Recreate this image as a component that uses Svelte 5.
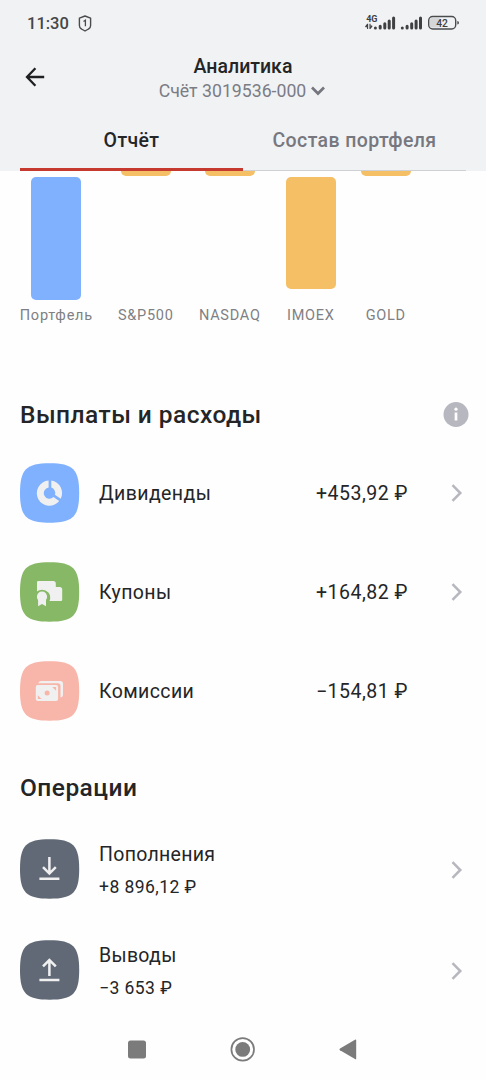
<script>
	const bars = [
		{label: "Портфель", width: 73, top: 5.5, height: 123.5, color: "#7fb1ff"},
		{label: "S&P500", width: 56, top: 0, height: 5.4, color: "#f5bf66"},
		{label: "NASDAQ", width: 62, top: 0, height: 5.4, color: "#f5bf66"},
		{label: "IMOEX", width: 50, top: 6, height: 112, color: "#f5bf66"},
		{label: "GOLD", width: 50, top: 0, height: 5.4, color: "#f5bf66"},
	];
	
	const payments = [
		{icon: "pie", label: "Дивиденды", amount: "+453,92 ₽", link: true},
		{icon: "coupon", label: "Купоны", amount: "+164,82 ₽", link: true},
		{icon: "cash", label: "Комиссии", amount: "−154,81 ₽", link: false},
	];
	
	const operations = [
		{icon: "down", label: "Пополнения", amount: "+8 896,12 ₽"},
		{icon: "up", label: "Выводы", amount: "−3 653 ₽"},
	];
	
	let tab = $state("report");
</script>

{#snippet chevron()}
	<svg class="chevron" width="14" height="20" viewBox="0 0 14 20">
		<path d="M2.5 2.2 10.3 10 2.5 17.8" fill="none" stroke="#b7b7bf" stroke-width="2.5" />
	</svg>
{/snippet}

{#snippet tile(icon)}
	<svg class="tile {icon}" width="60" height="60" viewBox="0 0 60 60">
		<path class="bg" d="M29.6 .3C53 .3 59.2 6.5 59.2 30S53 59.7 29.6 59.7 0 53.5 0 30 6.2 .3 29.6 .3Z" />
		{#if icon === "pie"}
			<path d="M28.6 17.6V24.6A5.6 5.6 0 1 0 33.4 34.1L39.2 38.1A12.6 12.6 0 1 1 28.6 17.6Z" />
			<path d="M31.3 17.5A12.6 12.6 0 0 1 40.7 35.7L34.9 31.8A5.6 5.6 0 0 0 31.3 24.6Z" />
		{:else if icon === "coupon"}
			<path d="M17 20.2Q17 19 18.2 19H33.3Q35.8 19 35.8 21.5V25H39.7Q42.2 25 42.2 27.5V37.7Q42.2 39 41 39H29.5Q31.5 34.2 28.4 30.5 25 27 20.5 27.9 18.6 28.3 17 29.5Z" />
			<circle cx="22" cy="34.7" r="5.1" />
			<path d="M18.1 37H26V44.3L22 42 18.1 44.3Z" />
		{:else if icon === "cash"}
			<path d="M18.2 22.3Q19 20 21.3 20H40.3Q43 20 43 22.7V34Q43 36 40.5 36.5V25Q40.5 22.3 37.8 22.3Z" />
			<path fill-rule="evenodd" d="M17.8 24H36.1Q38.1 24 38.1 26V38Q38.1 40 36.1 40H17.8Q15.8 40 15.8 38V26Q15.8 24 17.8 24ZM17.8 34.3V38H21.5ZM32.5 26V26.3L36.1 29.8V26Z" />
			<circle class="coin" cx="27.1" cy="32" r="2.5" />
		{:else if icon === "down"}
			<path class="line" d="M29.4 18V34.5M23 28.2 29.4 34.6 35.8 28.2M19.4 39.8H39.4" />
		{:else}
			<path class="line" d="M29.4 36V20.5M23 26.4 29.4 20 35.8 26.4M19.4 39.9H39.4" />
		{/if}
	</svg>
{/snippet}

<div class="screen">
	<header>
		<div class="status">
			<span class="time">11:30</span>
			<svg class="shield" width="14" height="17" viewBox="0 0 14 17">
				<path d="M7 1 12.6 3.2V10.5Q12.6 13 10.5 14L7 16 3.5 14Q1.4 13 1.4 10.5V3.2Z" fill="none" stroke="#4a4b4d" stroke-width="1.4" stroke-linejoin="round" />
				<path d="M5.5 6.5 7.4 5.3V11.3" fill="none" stroke="#4a4b4d" stroke-width="1.3" />
			</svg>
			<svg class="signals" width="96" height="18" viewBox="0 0 96 18">
				<text x="1.2" y="8" font-size="9" font-weight="700">4G</text>
				<path d="M2.6 9.8V15M.4 12.8 2.6 10.2M.4 12.8H2.6M5 9.8V15M7.2 12 5 14.6M7.2 12H5" fill="none" stroke="#3f4042" stroke-width="1.1" />
				<g stroke="#3f4042" stroke-width="3" stroke-linecap="round">
					<path d="M10.4 14V14.1M15.2 12.2V14.1M19.8 9.7V14.1M24.2 6.9V14.1M28.6 4.1V14.1" />
					<path d="M37.3 14V14.1M42.1 12.2V14.1M46.7 9.7V14.1M51.1 6.9V14.1M55.5 4.1V14.1" />
				</g>
				<path d="M66.5 4H74.5V13.5H66.5Q65 13.5 65 12V5.5Q65 4 66.5 4Z" fill="#d5d6d8" />
				<rect x="63.7" y="2.5" width="27" height="12.5" rx="4" fill="none" stroke="#4a4b4d" stroke-width="1.4" />
				<path d="M92.3 7Q94 7 94 8.8T92.3 10.6Z" fill="#4a4b4d" />
				<text x="77" y="12.6" font-size="10.3" font-weight="500" text-anchor="middle">42</text>
			</svg>
		</div>
		<div class="appbar">
			<button class="back" aria-label="Назад">
				<svg width="20" height="20" viewBox="0 0 20 20">
					<path d="M10.4 1.2 2 10 10.4 18.8M2 10H19.2" fill="none" stroke="#1f2022" stroke-width="2.3" />
				</svg>
			</button>
			<div class="titles">
				<h1>Аналитика</h1>
				<div class="account">
					<span>Счёт 3019536-000</span>
					<svg width="14" height="10" viewBox="0 0 14 10">
						<path d="M1 1.5 7 7.5 13 1.5" fill="none" stroke="#75767e" stroke-width="2.7" />
					</svg>
				</div>
			</div>
		</div>
		<div class="tabs">
			<button class:active={tab === "report"} onclick={() => tab = "report"}>Отчёт</button>
			<button class:active={tab === "portfolio"} onclick={() => tab = "portfolio"}>Состав портфеля</button>
		</div>
	</header>
	
	<div class="chart">
		{#each bars as bar}
			<div class="column" style:width="{bar.width}px">
				<div class="plot" style:padding-top="{bar.top}px">
					<div
						class="bar"
						class:cut={bar.top === 0}
						style:height="{bar.height}px"
						style:background-color={bar.color}
					></div>
				</div>
				<span>{bar.label}</span>
			</div>
		{/each}
	</div>
	
	<section class="payments">
		<div class="heading">
			<h2>Выплаты и расходы</h2>
			<svg width="26" height="26" viewBox="0 0 26 26">
				<circle cx="13" cy="12.5" r="12.5" fill="#b7b7bf" />
				<circle cx="13" cy="7.2" r="1.6" fill="#fff" />
				<path d="M13 10.5V18.5" stroke="#fff" stroke-width="2.7" />
			</svg>
		</div>
		{#each payments as item}
			<div class="row">
				{@render tile(item.icon)}
				<span class="label">{item.label}</span>
				<span class="amount">{item.amount}</span>
				<div class="end">
					{#if item.link}
						{@render chevron()}
					{/if}
				</div>
			</div>
		{/each}
	</section>
	
	<section class="operations">
		<div class="heading">
			<h2>Операции</h2>
		</div>
		{#each operations as item}
			<div class="row">
				{@render tile(item.icon)}
				<div class="lines">
					<span class="label">{item.label}</span>
					<span class="sub">{item.amount}</span>
				</div>
				<div class="end">
					{@render chevron()}
				</div>
			</div>
		{/each}
	</section>
	
	<nav>
		<svg width="26" height="26" viewBox="0 0 26 26">
			<rect x="4" y="4.4" width="18" height="18" rx="2.5" />
		</svg>
		<svg width="26" height="26" viewBox="0 0 26 26">
			<circle cx="12.7" cy="13.4" r="11.3" fill="none" stroke="#7b7b7b" stroke-width="1.7" />
			<circle cx="12.7" cy="13.4" r="7.4" />
		</svg>
		<svg width="26" height="26" viewBox="0 0 26 26">
			<path d="M4 12.5 19 3.7Q20.2 3 20.2 4.4V22.4Q20.2 23.8 19 23.1L4 14.3Q2.7 13.4 4 12.5Z" />
		</svg>
	</nav>
</div>

<style>
	:global(body) {
		margin: 0;
		background-color: #fefefe;
	}
	.screen {
		width: 486px;
		height: 1080px;
		overflow: hidden;
		display: flex;
		flex-direction: column;
		
		font-family: Roboto, "Noto Sans", sans-serif;
		color: #242527;
		background-color: #fefefe;
	}
	svg {
		display: block;
		flex-shrink: 0;
	}
	h1, h2 {
		margin: 0;
		font-weight: 500;
	}
	button {
		border: 0;
		padding: 0;
		background: none;
		font: inherit;
		cursor: pointer;
	}
	
	header {
		height: 171px;
		flex-shrink: 0;
		background-color: #f1f2f4;
	}
	.status {
		display: flex;
		align-items: center;
		height: 46px;
		padding: 0 25px 0 27px;
		box-sizing: border-box;
	}
	.time {
		width: 42px;
		padding-top: 1px;
		
		font-size: 16.5px;
		font-weight: 500;
		color: #454648;
	}
	.shield {
		margin-left: 9px;
	}
	.signals {
		margin-left: auto;
		fill: #3f4042;
	}
	.appbar {
		display: grid;
		grid-template-columns: 46px 1fr 46px;
		height: 64px;
	}
	.back {
		display: flex;
		align-items: center;
		padding: 0 0 3px 25px;
		box-sizing: border-box;
	}
	.titles {
		display: flex;
		flex-direction: column;
		align-items: center;
		padding-top: 8px;
	}
	h1 {
		font-size: 19.5px;
		line-height: 25px;
	}
	.account {
		display: flex;
		align-items: center;
		gap: 5px;
		padding-right: 2px;
		
		font-size: 17.7px;
		line-height: 24px;
		color: #7b7c84;
	}
	.tabs {
		display: grid;
		grid-template-columns: 1fr 1fr;
		height: 61px;
		padding: 0 20px;
	}
	.tabs button {
		border-bottom: solid 1px #cfd0d3;
		
		font-size: 19.5px;
		font-weight: 500;
		letter-spacing: 0.4px;
		color: #77787f;
	}
	.tabs .active {
		border-bottom: solid 3px #c5392e;
		padding-top: 2px;
		color: #242527;
	}
	
	.chart {
		display: flex;
		gap: 25px;
		height: 225px;
		flex-shrink: 0;
		padding-left: 19.8px;
	}
	.column {
		display: flex;
		flex-direction: column;
		align-items: center;
		
		font-size: 14.5px;
		line-height: 18px;
		letter-spacing: 0.75px;
		white-space: nowrap;
		color: #7f8084;
	}
	.plot {
		height: 136px;
		box-sizing: border-box;
	}
	.bar {
		width: 50px;
		border-radius: 5px;
	}
	.cut {
		border-radius: 0 0 5px 5px;
	}
	
	.heading {
		display: flex;
		align-items: center;
		justify-content: space-between;
		height: 37px;
		padding: 0 17px 0 20px;
	}
	h2 {
		font-size: 24.5px;
		letter-spacing: 0.46px;
	}
	.payments {
		height: 373px;
		flex-shrink: 0;
	}
	.payments .heading {
		margin-bottom: 10px;
	}
	.row {
		display: flex;
		align-items: center;
		height: 99px;
		padding: 0 22px 0 20px;
	}
	.label {
		font-size: 19.5px;
		letter-spacing: 0.4px;
	}
	.row > .label, .lines {
		margin-left: 19px;
		flex-grow: 1;
	}
	.amount {
		font-size: 19.5px;
		letter-spacing: 0.5px;
	}
	.row > .label, .amount {
		padding-top: 1px;
	}
	.end {
		display: flex;
		justify-content: flex-end;
		width: 56px;
	}
	.lines {
		display: flex;
		flex-direction: column;
		gap: 8px;
		padding-top: 2px;
		line-height: 24px;
	}
	.lines .label {
		letter-spacing: 0.3px;
	}
	.sub {
		font-size: 17.5px;
		letter-spacing: 0.45px;
	}
	
	.operations {
		height: 252px;
		flex-shrink: 0;
	}
	.operations .heading {
		height: 36px;
		margin-bottom: 14px;
	}
	.operations .row {
		height: 101px;
	}
	.operations .tile {
		margin-bottom: 1px;
	}
	
	.tile {
		fill: #f0f0f1;
	}
	.pie .bg {
		fill: #7fb1ff;
	}
	.coupon .bg {
		fill: #86b865;
	}
	.cash .bg, .coin {
		fill: #f8b5a9;
	}
	.down .bg, .up .bg {
		fill: #606975;
	}
	.line {
		fill: none;
		stroke: #f0f0f1;
		stroke-width: 2.5;
	}
	
	nav {
		display: flex;
		justify-content: center;
		gap: 80px;
		padding-top: 15px;
		fill: #7b7b7b;
	}
</style>
